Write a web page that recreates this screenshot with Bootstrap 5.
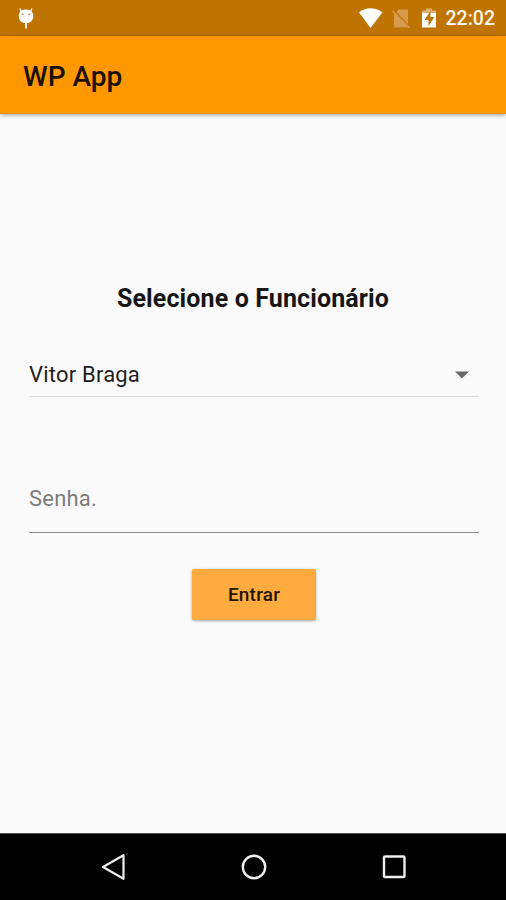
<!DOCTYPE html>
<html lang="pt-BR">
<head>
<meta charset="utf-8">
<meta name="viewport" content="width=device-width, initial-scale=1">
<title>WP App</title>
<link href="https://cdn.jsdelivr.net/npm/bootstrap@5.3.0/dist/css/bootstrap.min.css" rel="stylesheet">
<style>
  body { font-family: Roboto, "Liberation Sans", sans-serif; background: #fafafa; color: #1f1f1f; height: 900px; overflow: hidden; }
  svg { display: block; flex: none; }
  .status-bar { height: 36px; background: #bf7300; padding: 0 11px 0 17px; }
  .clock { font-size: 19.5px; font-weight: 500; line-height: 36px; letter-spacing: 0; color: #fff6e6; padding-top: 2px; }
  .app-bar { height: 78px; background: #ff9800; padding: 3px 23px 0; box-shadow: 0 1px 4px rgba(0,0,0,.38); z-index: 1; }
  .app-title { font-size: 28px; font-weight: 500; line-height: 36px; letter-spacing: 0; color: #1c1000; }
  .login { padding: 167px 27px 0 29px; }
  .heading { font-size: 25px; font-weight: 700; line-height: 36px; letter-spacing: .12px; color: #161616; padding-right: 2px; }
  .employee { height: 46px; margin-top: 34px; border-bottom: 1px solid #d9d9d9; font-size: 22px; line-height: 46px; letter-spacing: .2px; }
  .password, .password:focus { height: 68px; margin-top: 68px; padding: 0; border: 0; border-bottom: 1px solid #8b8b8b; border-radius: 0; background: transparent; box-shadow: none; font-size: 22px; letter-spacing: .2px; }
  .password::placeholder { color: #7c7c7c; opacity: 1; }
  .enter { width: 124px; height: 51px; margin-top: 36px; border: 0; border-radius: 2px; background: #ffab40; color: #231500; font-size: 19px; font-weight: 500; letter-spacing: .2px; box-shadow: 0 1px 3px rgba(0,0,0,.32); }
  .enter span { position: relative; top: 1px; }
  .employee span { padding-top: 2px; }
  .employee svg { margin-top: 2px; }
  .nav-keys { height: 67px; background: #000; border-top: 1px solid #555; padding: 0 98px 0 99px; }
</style>
</head>
<body class="d-flex flex-column">
<div class="status-bar d-flex align-items-center justify-content-between">
  <svg width="18" height="36" viewBox="0 0 18 36">
    <path d="M4.500 12 3 8.500M13.500 12 15 8.500" stroke="#fff" stroke-width="1.300"/>
    <path d="M4 10.500Q9 8.500 14 10.500C17.300 14 17 20.500 12.500 22.400Q9 23.500 5.500 22.400C1 20.500.7 14 4 10.500Z" fill="#fff"/>
    <path d="M9 22v6.500" stroke="#fff" stroke-width="1.800"/>
    <circle cx="5.700" cy="14.200" r="1" fill="#b79868"/><circle cx="12.300" cy="14.200" r="1" fill="#b79868"/>
  </svg>
  <div class="d-flex align-items-center">
    <svg width="87" height="36" viewBox="359 0 87 36">
      <path d="M359 12.300Q370.500 4.200 382.500 12.300L370.500 28Z" fill="#fff"/>
      <path d="M398.500 9.500H408v14.500L396.500 12ZM394 13.500l14 14H394Z" fill="#d59a4c"/>
      <path d="m392.500 11 17 17" stroke="#d8a057" stroke-width="1.600"/>
      <path d="M426 8.500h6v2h4V15h-14v-4.500h4Z" fill="#dfb273"/>
      <path d="M422 13h14v14.500h-14Z" fill="#fff"/>
      <path d="m430.500 11-6 9h4v6l6-9h-4Z" fill="#bf7300"/>
    </svg>
    <span class="clock">22:02</span>
  </div>
</div>
<header class="app-bar d-flex align-items-center position-relative">
  <h1 class="app-title m-0">WP App</h1>
</header>
<main class="login flex-grow-1">
  <h2 class="heading text-center m-0">Selecione o Funcionário</h2>
  <div class="employee d-flex justify-content-between align-items-center" role="combobox" aria-expanded="false" tabindex="0">
    <span>Vitor Braga</span>
    <svg class="me-2" width="18" height="8" viewBox="0 0 18 8"><path d="M2 .5h14L9 7.500Z" fill="#666"/></svg>
  </div>
  <input class="password form-control" type="password" placeholder="Senha." aria-label="Senha">
  <button class="enter btn d-block mx-auto p-0" type="button"><span>Entrar</span></button>
</main>
<nav class="nav-keys d-flex align-items-center justify-content-between" aria-label="Sistema">
  <svg width="28" height="30" viewBox="0 0 28 30"><path d="M24.500 3.200v23.600L4 15Z" fill="none" stroke="#eee" stroke-width="2.200" stroke-linejoin="round"/></svg>
  <svg width="28" height="30" viewBox="0 0 28 30"><circle cx="14" cy="15" r="11.200" fill="none" stroke="#eee" stroke-width="2.400"/></svg>
  <svg width="28" height="30" viewBox="0 0 28 30"><rect x="4" y="4.500" width="20.500" height="20.500" rx="1" fill="none" stroke="#eee" stroke-width="2.400"/></svg>
</nav>
<script src="https://cdn.jsdelivr.net/npm/bootstrap@5.3.0/dist/js/bootstrap.bundle.min.js"></script>
</body>
</html>
